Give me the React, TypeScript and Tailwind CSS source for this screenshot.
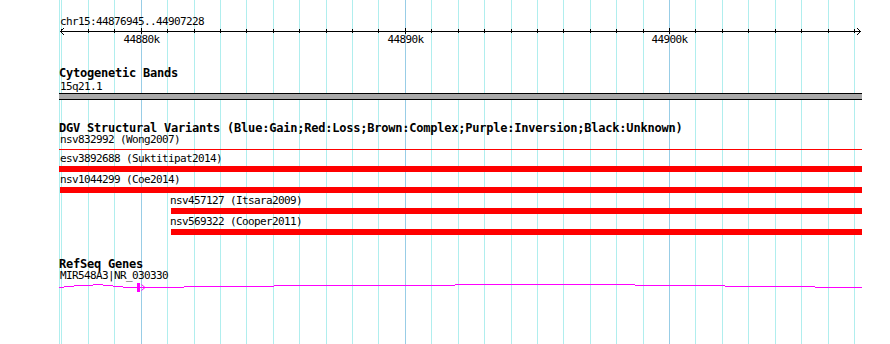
import React from 'react';

const START = 44876945;
const END = 44907228;
const xOf = (p: number) => 60 + ((p - START) * 800) / (END - START + 1);

// one grid line per kilobase
const grid = Array.from({ length: 31 }, (_, i) => 44877 + i).map(k => ({
  k,
  x: Math.round(xOf(k * 1000)),
  major: k % 10 === 0,
}));

const MONO = "'DejaVu Sans Mono', monospace";
const label = "font-['DejaVu_Sans_Mono',monospace] text-[11px] tracking-[-0.62px] leading-[10px] h-[10px] text-black whitespace-nowrap";
const title = "font-['DejaVu_Sans_Mono',monospace] font-bold text-[12px] tracking-[-0.22px] leading-[11px] h-[11px] text-black whitespace-nowrap";

// intron line of the gene, [from, to, row]
const geneLine: [number, number, number][] = [
  [59, 64, 288], [64, 74, 287], [74, 93, 286], [93, 103, 285], [103, 113, 286],
  [113, 123, 287], [123, 137, 288], [140, 184, 288], [184, 274, 287], [274, 455, 286],
  [455, 635, 285], [635, 725, 286], [725, 815, 287], [815, 862, 288],
];

const Ruler = () => (
  <svg width="890" height="18" className="block" shapeRendering="crispEdges">
    <line x1={60} y1={4.5} x2={861} y2={4.5} stroke="#000" />
    {grid.map(g => (
      <line key={g.k} x1={g.x + 0.5} x2={g.x + 0.5} y1={g.major ? 1 : 2} y2={g.major ? 7 : 6} stroke="#000" />
    ))}
    <polyline points="64,1 60.5,4.5 64,8" fill="none" stroke="#000" shapeRendering="auto" />
    <polyline points="857,1 860.5,4.5 857,8" fill="none" stroke="#000" shapeRendering="auto" />
    {grid.filter(g => g.major).map(g => (
      <text key={g.k} x={g.x + 0.5} y={16} textAnchor="middle" fontSize={11} letterSpacing={-0.62} fontFamily={MONO} fill="#000">
        {g.k}k
      </text>
    ))}
  </svg>
);

const Bar = ({ offset = 0 }: { offset?: number }) => (
  <div className="h-[6px] bg-[#ff0000] mt-[2px]" style={{ marginLeft: offset }} />
);

const Variant = ({ name, offset = 0, bar = 0 }: { name: string; offset?: number; bar?: number }) => (
  <div className="mt-[3px]">
    <div className={label} style={{ marginLeft: offset }}>{name}</div>
    <Bar offset={bar} />
  </div>
);

export default function App() {
  return (
    <div className="relative w-[890px] h-[344px] bg-white overflow-hidden">
      {/* background grid */}
      <div className="absolute inset-0">
        <div className="absolute top-0 bottom-0 left-[59px] w-px bg-[#b0eeee]" />
        {grid.map(g => (
          <div
            key={g.k}
            className={g.major ? 'absolute top-0 bottom-0 w-px bg-[#98cde6]' : 'absolute top-0 bottom-0 w-px bg-[#b0eeee]'}
            style={{ left: g.x }}
          />
        ))}
      </div>

      <div className="relative flex flex-col">
        <div className="pt-[17px] pl-[60px]">
          <div className={label}>chr15:44876945..44907228</div>
        </div>
        <Ruler />

        {/* cytogenetic bands */}
        <div className="ml-[59px] w-[803px] flex flex-col">
          <div className={`${title} mt-[23px]`}>Cytogenetic Bands</div>
          <div className={`${label} mt-[3px] pl-px`}>15q21.1</div>
          <div className="mt-px h-[7px] bg-[#a9a9a9] border-y border-black" />

          {/* structural variants */}
          <div className={`${title} mt-[23px]`}>
            DGV Structural Variants (Blue:Gain;Red:Loss;Brown:Complex;Purple:Inversion;Black:Unknown)
          </div>
          <div className={`${label} mt-px pl-px`}>nsv832992 (Wong2007)</div>
          <div className="mt-[4px] h-px bg-[#ff0000]" />
          <div className="mt-[4px]">
            <div className={`${label} pl-px`}>esv3892688 (Suktitipat2014)</div>
            <Bar />
          </div>
          <Variant name="nsv1044299 (Coe2014)" offset={1} bar={1} />
          <Variant name="nsv457127 (Itsara2009)" offset={111} bar={112} />
          <Variant name="nsv569322 (Cooper2011)" offset={111} bar={112} />

          {/* refseq */}
          <div className={`${title} mt-[24px]`}>RefSeq Genes</div>
          <div className={`${label} mt-px pl-px`}>MIR548A3|NR_030330</div>
        </div>

        <svg width="890" height="14" className="block" shapeRendering="crispEdges">
          {geneLine.map(([a, b, row]) => (
            <rect key={a} x={a} y={row - 282} width={b - a} height={1} fill="#ff00ff" />
          ))}
          <rect x={137} y={2} width={3} height={9} fill="#ff00ff" />
          <polyline points="141.5,3.5 145,6.5 141.5,9.5" fill="none" stroke="#ff00ff" shapeRendering="auto" />
        </svg>
      </div>
    </div>
  );
}
